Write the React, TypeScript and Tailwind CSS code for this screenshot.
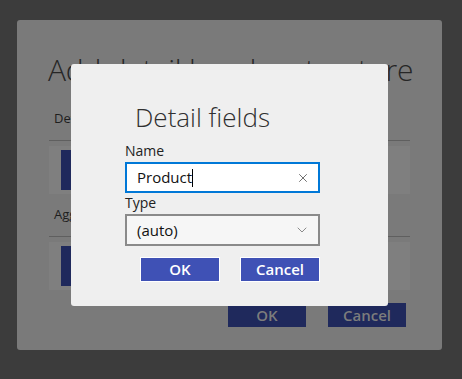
import { X, ChevronDown } from 'lucide-react';

const font = { fontFamily: '"Open Sans", "Noto Sans", sans-serif' };

function BackSection({ label }: { label: string }) {
  return (
    <div>
      <div className="h-[42px] flex items-center pl-[5px] text-[13px] text-[#1e1e1e]">{label}</div>
      <div className="h-px bg-[#5f5f5f]" />
      <div className="mt-[5px] h-[48px] bg-[#7f7f7f] py-[4px] pl-[12px]">
        <div className="h-full w-[60px] bg-[#1f295c]" />
      </div>
    </div>
  );
}

export default function App() {
  return (
    <div className="relative w-[462px] h-[379px] bg-[#3c3c3c] pt-[20px] pl-[17px]" style={font}>
      <div className="w-[425px] h-[330px] rounded-[3px] bg-[#7a7a7a] px-[32px] pt-[30px]">
        <div className="h-[48px] whitespace-nowrap text-[30px] font-light leading-[40px] tracking-[-0.2px] text-[#262626] -ml-px">
          Add detail header structure
        </div>
        <BackSection label="Detail fields" />
        <BackSection label="Aggregations" />
        <div className="mt-[13px] flex justify-end gap-[22px] pr-[4px]">
          <div className="w-[78px] h-[24px] bg-[#1f295c] flex items-center justify-center text-[15px] font-semibold text-[#7c7c7c]">OK</div>
          <div className="w-[78px] h-[24px] bg-[#1f295c] flex items-center justify-center text-[15px] font-semibold text-[#7c7c7c]">Cancel</div>
        </div>
      </div>

      <div className="absolute left-[71px] top-[64px] w-[317px] h-[242px] rounded-[3px] bg-[#efefef]">
        <div className="pl-[64px] pt-[35px] h-[78px] text-[26px] font-light leading-[36px] text-[#303030]">Detail fields</div>
        <div className="ml-[54px] w-[195px]">
          <div className="h-[20px] text-[14px] leading-[18px] text-[#222]">Name</div>
          <div className="h-[31px] border-2 border-[#0078d7] bg-white flex items-center pl-[10px] pr-[8px]">
            <span className="text-[15px] text-[#111]">Product</span>
            <span className="w-px h-[18px] bg-black" />
            <span className="flex-1" />
            <X size={14} strokeWidth={1.2} className="text-[#333]" />
          </div>
          <div className="mt-[1px] h-[20px] text-[14px] leading-[18px] text-[#222]">Type</div>
          <div className="h-[32px] border-2 border-[#8a8a8a] bg-[#f6f6f6] flex items-center pl-[10px] pr-[8px]">
            <span className="flex-1 text-[15px] text-[#111]">(auto)</span>
            <ChevronDown size={16} strokeWidth={1} className="text-[#555]" />
          </div>
        </div>
        <div className="mt-[11px] ml-[69px] flex gap-[20px]">
          <div className="w-[80px] h-[25px] border border-white bg-[#3f51b5] flex items-center justify-center text-[15px] font-semibold text-white">OK</div>
          <div className="w-[80px] h-[25px] border border-white bg-[#3f51b5] flex items-center justify-center text-[15px] font-semibold text-white">Cancel</div>
        </div>
      </div>
    </div>
  );
}
